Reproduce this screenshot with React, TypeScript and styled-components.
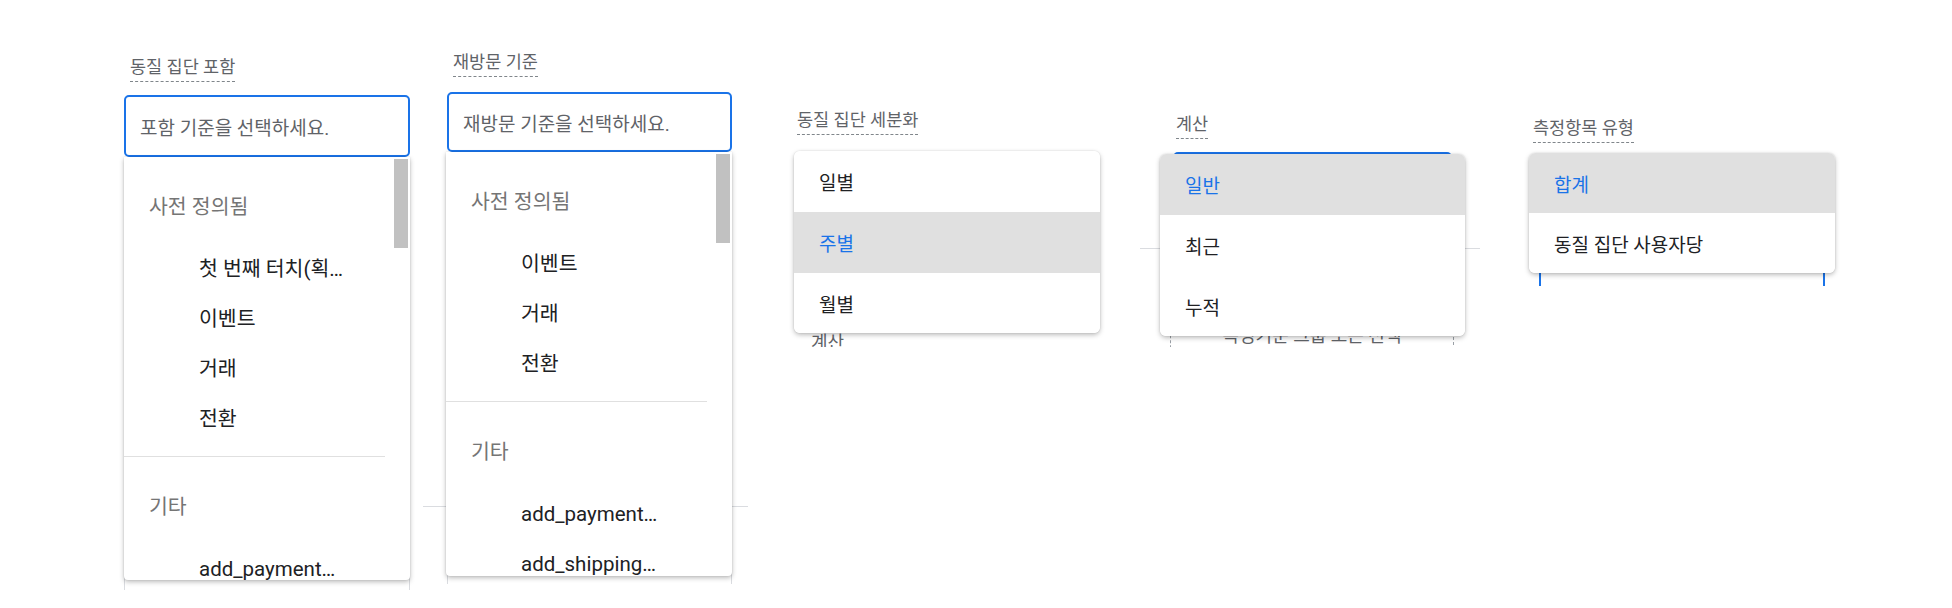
import React from 'react';
import styled, { createGlobalStyle } from 'styled-components';

const GlobalStyle = createGlobalStyle`
  html, body {
    margin: 0;
    padding: 0;
    background: #fff;
  }
  body {
    font-family: Roboto, "Noto Sans CJK KR", "Noto Sans", sans-serif;
    -webkit-font-smoothing: antialiased;
  }
`;

const Page = styled.div`
  display: flex;
  align-items: flex-start;
  width: 1952px;
  height: 608px;
  overflow: hidden;
`;

// one pasted screenshot crop
const Shot = styled.section<{ $left: number; $top: number; $width: number }>`
  position: relative;
  flex: none;
  width: ${({ $width }) => $width}px;
  margin-left: ${({ $left }) => $left}px;
  margin-top: ${({ $top }) => $top}px;
`;

// the form that sits under the open menu, cut off at the crop edge
const Backdrop = styled.div<{ $height: number }>`
  display: flex;
  flex-direction: column;
  align-items: flex-start;
  height: ${({ $height }) => $height}px;
  overflow: hidden;
`;

const Label = styled.span<{ $indent: number }>`
  margin-left: ${({ $indent }) => $indent}px;
  padding-bottom: 4px;
  border-bottom: 1px dashed #80868b;
  font-size: 17.5px;
  line-height: 20px;
  color: #5f6368;
  white-space: nowrap;
`;

const Select = styled.div<{ $indent: number; $width: number; $height: number; $gap: number }>`
  box-sizing: border-box;
  display: flex;
  align-items: center;
  flex: none;
  width: ${({ $width }) => $width}px;
  height: ${({ $height }) => $height}px;
  margin: ${({ $gap }) => $gap}px 0 0 ${({ $indent }) => $indent}px;
  padding: 0 14px;
  border: 2px solid #1a73e8;
  border-radius: 5px;
  font-size: 19px;
  color: #5f6368;
  white-space: nowrap;
`;

const Rule = styled.div<{ $gap: number }>`
  align-self: stretch;
  flex: none;
  height: 1px;
  margin-top: ${({ $gap }) => $gap}px;
  background: #dadce0;
`;

const GhostField = styled.div<{ $indent: number; $width: number; $gap: number }>`
  box-sizing: border-box;
  flex: none;
  width: ${({ $width }) => $width}px;
  height: 100px;
  margin: ${({ $gap }) => $gap}px 0 0 ${({ $indent }) => $indent}px;
  border: 1px solid #dadce0;
  border-radius: 4px;
`;

const GhostText = styled.span<{ $indent: number; $gap: number }>`
  flex: none;
  margin: ${({ $gap }) => $gap}px 0 0 ${({ $indent }) => $indent}px;
  font-size: 18px;
  line-height: 20px;
  color: #5f6368;
`;

const DropZone = styled.div<{ $indent: number; $width: number; $gap: number }>`
  box-sizing: border-box;
  display: flex;
  justify-content: center;
  flex: none;
  width: ${({ $width }) => $width}px;
  height: 80px;
  margin: ${({ $gap }) => $gap}px 0 0 ${({ $indent }) => $indent}px;
  padding-top: 25px;
  border: 1px dashed #9aa0a6;
  border-radius: 4px;
  font-size: 18px;
  line-height: 20px;
  color: #5f6368;
`;

// open dropdown lying over the form
const Popup = styled.div<{ $card?: boolean }>`
  position: absolute;
  display: flex;
  background: #fff;
  overflow: hidden;
  border-radius: ${({ $card }) => ($card ? '6px' : '0 0 4px 4px')};
  box-shadow: 0 2px 5px rgba(0, 0, 0, 0.26), 0 0 2px rgba(0, 0, 0, 0.12);
`;

const List = styled.div`
  flex: 1;
  min-width: 0;
`;

const Group = styled.div`
  padding: 25px 0 12px;
`;

const Divider = styled.div`
  height: 1px;
  margin-right: 9px;
  background: #e0e0e0;
`;

const GroupTitle = styled.div`
  height: 50px;
  padding-left: 25px;
  margin-bottom: 12px;
  font-size: 20.5px;
  line-height: 50px;
  color: #757575;
`;

const Option = styled.div`
  height: 50px;
  padding-left: 75px;
  font-size: 20.5px;
  line-height: 50px;
  color: #202124;
  white-space: nowrap;
`;

const Track = styled.div`
  flex: none;
  width: 16px;
`;

const Thumb = styled.div`
  height: 89px;
  margin: 2px 2px 0 0;
  background: #c1c1c1;
`;

const CardOption = styled.div<{ $row: number; $active?: boolean }>`
  display: flex;
  align-items: center;
  height: ${({ $row }) => $row}px;
  padding-left: 25px;
  font-size: 19px;
  color: ${({ $active }) => ($active ? '#1a73e8' : '#202124')};
  background: ${({ $active }) => ($active ? '#e0e0e0' : '#fff')};
  white-space: nowrap;
`;

type Box = { top: number; left: number; width: number; height: number };

type GroupData = { title: string; items: string[] };

const GroupedMenu = ({ box, groups }: { box: Box; groups: GroupData[] }) => (
    <Popup style={box}>
        <List>
            {groups.map((group, i) => (
                <React.Fragment key={group.title}>
                    {i > 0 && <Divider />}
                    <Group>
                        <GroupTitle>{group.title}</GroupTitle>
                        {group.items.map(item => (
                            <Option key={item}>{item}</Option>
                        ))}
                    </Group>
                </React.Fragment>
            ))}
        </List>
        <Track>
            <Thumb />
        </Track>
    </Popup>
);

const CardMenu = ({ box, items, active, row }: { box: Box; items: string[]; active: number; row: number }) => (
    <Popup $card style={box}>
        <List>
            {items.map((item, i) => (
                <CardOption key={item} $row={row} $active={i === active}>
                    {item}
                </CardOption>
            ))}
        </List>
    </Popup>
);

const App = () => (
    <Page>
        <GlobalStyle />

        <Shot $left={124} $top={57} $width={286}>
            <Backdrop $height={533}>
                <Label $indent={6}>동질 집단 포함</Label>
                <Select $indent={0} $width={286} $height={62} $gap={13}>포함 기준을 선택하세요.</Select>
                <GhostField $indent={0} $width={286} $gap={363} />
            </Backdrop>
            <GroupedMenu
                box={{ top: 100, left: 0, width: 286, height: 423 }}
                groups={[
                    { title: '사전 정의됨', items: ['첫 번째 터치(획…', '이벤트', '거래', '전환'] },
                    { title: '기타', items: ['add_payment…', 'add_shipping…'] },
                ]}
            />
        </Shot>

        <Shot $left={13} $top={52} $width={325}>
            <Backdrop $height={532}>
                <Label $indent={30}>재방문 기준</Label>
                <Select $indent={24} $width={285} $height={60} $gap={15}>재방문 기준을 선택하세요.</Select>
                <Rule $gap={354} />
                <GhostField $indent={24} $width={285} $gap={54} />
            </Backdrop>
            <GroupedMenu
                box={{ top: 100, left: 23, width: 286, height: 424 }}
                groups={[
                    { title: '사전 정의됨', items: ['이벤트', '거래', '전환'] },
                    { title: '기타', items: ['add_payment…', 'add_shipping…', 'add_to_cart'] },
                ]}
            />
        </Shot>

        <Shot $left={46} $top={110} $width={306}>
            <Backdrop $height={237}>
                <Label $indent={3}>동질 집단 세분화</Label>
                <GhostText $indent={17} $gap={198}>계산</GhostText>
            </Backdrop>
            <CardMenu
                box={{ top: 41, left: 0, width: 306, height: 182 }}
                items={['일별', '주별', '월별']}
                active={1}
                row={61}
            />
        </Shot>

        <Shot $left={40} $top={114} $width={340}>
            <Backdrop $height={233}>
                <Label $indent={36}>계산</Label>
                <Select $indent={33} $width={279} $height={50} $gap={13} />
                <Rule $gap={46} />
                <DropZone $indent={30} $width={284} $gap={51}>측정기준 그룹 또는 선택</DropZone>
            </Backdrop>
            <CardMenu
                box={{ top: 40, left: 20, width: 305, height: 182 }}
                items={['일반', '최근', '누적']}
                active={0}
                row={61}
            />
        </Shot>

        <Shot $left={40} $top={118} $width={325}>
            <Backdrop $height={168}>
                <Label $indent={13}>측정항목 유형</Label>
                <Select $indent={19} $width={286} $height={150} $gap={11} />
            </Backdrop>
            <CardMenu
                box={{ top: 35, left: 9, width: 306, height: 120 }}
                items={['합계', '동질 집단 사용자당']}
                active={0}
                row={60}
            />
        </Shot>
    </Page>
);

export default App;
